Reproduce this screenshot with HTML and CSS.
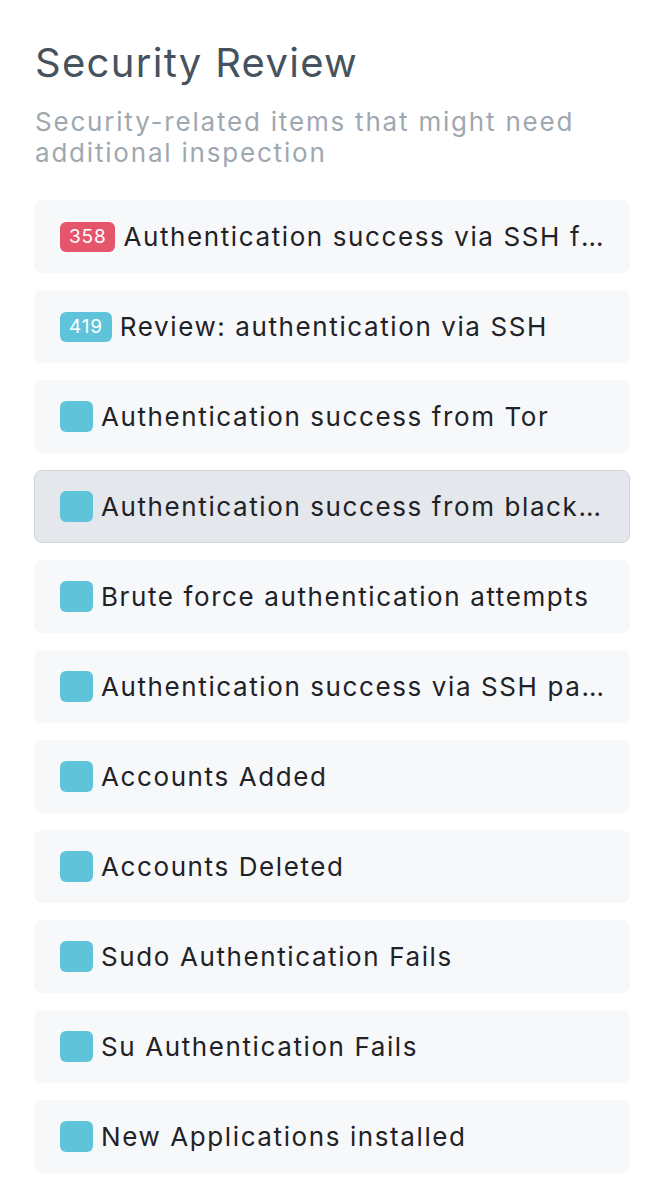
FILE: index.html
```html
<!DOCTYPE html>
<html lang="en">
<head>
<meta charset="utf-8">
<title>Security Review</title>
<link rel="stylesheet" href="styles.css">
</head>
<body>
<main class="panel">
  <h1 class="title">Security Review</h1>
  <p class="subtitle">Security-related items that might need additional inspection</p>
  <ul class="list">
    <li class="item"><span class="badge badge-red">358</span><span class="label">Authentication success via SSH from unusual location</span></li>
    <li class="item"><span class="badge badge-cyan">419</span><span class="label">Review: authentication via SSH</span></li>
    <li class="item"><span class="badge badge-cyan badge-empty"></span><span class="label">Authentication success from Tor</span></li>
    <li class="item item-active"><span class="badge badge-cyan badge-empty"></span><span class="label">Authentication success from blacklisted IP</span></li>
    <li class="item"><span class="badge badge-cyan badge-empty"></span><span class="label">Brute force authentication attempts</span></li>
    <li class="item"><span class="badge badge-cyan badge-empty"></span><span class="label">Authentication success via SSH password</span></li>
    <li class="item"><span class="badge badge-cyan badge-empty"></span><span class="label">Accounts Added</span></li>
    <li class="item"><span class="badge badge-cyan badge-empty"></span><span class="label">Accounts Deleted</span></li>
    <li class="item"><span class="badge badge-cyan badge-empty"></span><span class="label">Sudo Authentication Fails</span></li>
    <li class="item"><span class="badge badge-cyan badge-empty"></span><span class="label">Su Authentication Fails</span></li>
    <li class="item"><span class="badge badge-cyan badge-empty"></span><span class="label">New Applications installed</span></li>
  </ul>
</main>
</body>
</html>
```
FILE: styles.css
```css
html, body {
  margin: 0;
  padding: 0;
  background: #ffffff;
}

body {
  font-family: Inter, "Noto Sans", sans-serif;
  color: #1f2226;
}

.panel {
  padding: 39px 30px 0 34px;
}

.title {
  margin: 0 0 0 1px;
  font-size: 40px;
  line-height: 48px;
  font-weight: 400;
  letter-spacing: 1.3px;
  color: #46535e;
}

.subtitle {
  margin: 19px 0 0 1px;
  font-size: 26px;
  line-height: 31px;
  font-weight: 400;
  letter-spacing: 1.8px;
  color: #9ea8b1;
}

.list {
  list-style: none;
  margin: 32px 0 0;
  padding: 0;
  display: flex;
  flex-direction: column;
  gap: 17px;
}

.item {
  box-sizing: border-box;
  height: 73px;
  padding: 0 25px;
  display: flex;
  align-items: center;
  gap: 8px;
  background: #f7f8fa;
  border: 1px solid transparent;
  border-radius: 8px;
  min-width: 0;
}

.item-active {
  background: #e4e7eb;
  border-color: #d2d6db;
}

.badge {
  flex: none;
  box-sizing: border-box;
  height: 30px;
  padding: 0 9px;
  border-radius: 6px;
  font-size: 19px;
  letter-spacing: 0.8px;
  line-height: 30px;
  color: #ffffff;
  display: inline-flex;
  align-items: center;
  justify-content: center;
}

.badge-red {
  background: #e5556b;
}

.badge-cyan {
  background: #5fc4da;
}

.badge-empty {
  width: 33px;
  height: 31px;
  padding: 0;
}

.label {
  min-width: 0;
  font-size: 26px;
  line-height: 34px;
  letter-spacing: 1.6px;
  white-space: nowrap;
  overflow: hidden;
  text-overflow: ellipsis;
}
```
